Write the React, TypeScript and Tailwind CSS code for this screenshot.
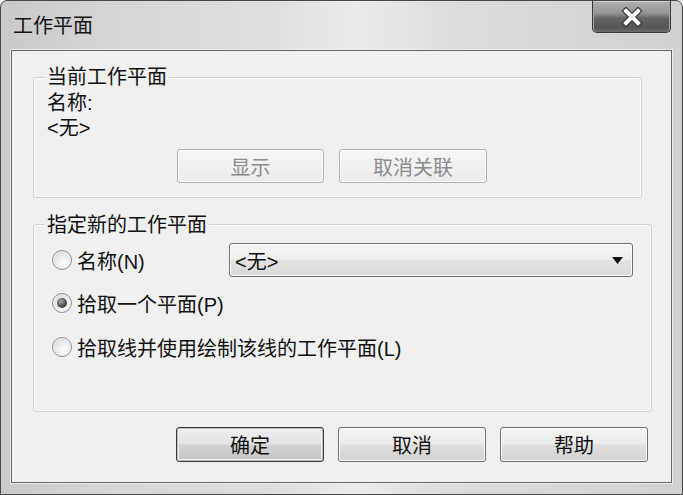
import React from "react";

function Radio({ checked }: { checked?: boolean }) {
  return (
    <span className="flex h-[20px] w-[20px] shrink-0 items-center justify-center rounded-full border border-[#8e8e8e] bg-[radial-gradient(circle_at_62%_68%,#ffffff_0%,#eeeeee_40%,#cdcdcd_100%)] shadow-[inset_0_0_0_1px_#f4f4f4]">
      {checked && (
        <span className="h-[10px] w-[10px] rounded-full bg-[radial-gradient(circle_at_40%_35%,#a8a8a8_0%,#4e4e4e_55%,#242424_100%)]" />
      )}
    </span>
  );
}

type Kind = "default" | "normal" | "disabled";

const btnStyles: Record<Kind, string> = {
  default:
    "border-[#3d3d3d] bg-[linear-gradient(180deg,#eeeeee_0%,#e4e4e4_48%,#d2d2d2_52%,#c6c6c6_100%)] shadow-[inset_0_0_0_1px_#b8b8b8,inset_0_0_0_2px_#f2f2f2] text-[#111111]",
  normal:
    "border-[#6f6f6f] bg-[linear-gradient(180deg,#f5f5f5_0%,#ececec_48%,#dedede_52%,#d2d2d2_100%)] shadow-[inset_0_0_0_1px_#fbfbfb] text-[#111111]",
  disabled:
    "border-[#b3b3b3] bg-[linear-gradient(180deg,#f6f6f6_0%,#f1f1f1_50%,#ebebeb_100%)] shadow-[inset_0_0_0_1px_#fcfcfc] text-[#8c8c8c]",
};

function Btn({ label, kind, w, h }: { label: string; kind: Kind; w: string; h: string }) {
  return (
    <div
      className={`flex shrink-0 items-center justify-center rounded-[3px] border pt-[3px] text-[20px] leading-[24px] ${btnStyles[kind]} ${w} ${h}`}
    >
      {label}
    </div>
  );
}

export default function App() {
  return (
    <div className="flex h-[495px] w-[683px] flex-col overflow-hidden rounded-t-[7px] border border-[#474747] bg-[linear-gradient(90deg,#c9c9c9_0%,#d5d5d5_15%,#dedede_40%,#ebebeb_52%,#dcdcdc_66%,#d1d1d1_100%)] font-['Liberation_Sans','Noto_Sans_CJK_SC',sans-serif] text-[#111111]">
      {/* Title bar */}
      <div className="flex h-[49px] shrink-0 items-start justify-between">
        <div className="pl-[12px] pt-[13px] text-[20px] leading-[24px] text-[#141414]">工作平面</div>
        <div className="mr-[11px] flex h-[32px] w-[79px] items-center justify-center rounded-b-[5px] border border-t-0 border-[#3a3a3a] bg-[linear-gradient(180deg,#b2b2b2_0%,#939393_40%,#646464_55%,#555555_85%,#6a6a6a_100%)] shadow-[inset_0_1px_0_#cfcfcf,inset_1px_0_0_#a5a5a5,inset_-1px_0_0_#a5a5a5]">
          <svg width="22" height="20" viewBox="0 0 22 20">
            <path d="M5 4 L17 16 M17 4 L5 16" stroke="#3a3a3a" strokeWidth="6.5" strokeLinecap="square" />
            <path d="M5 4 L17 16 M17 4 L5 16" stroke="#ffffff" strokeWidth="4" strokeLinecap="square" />
          </svg>
        </div>
      </div>

      {/* Client area */}
      <div className="ml-[10px] flex h-[433px] w-[661px] flex-col border border-[#666666] bg-[#f0f0f0] pl-[21px] pt-[14px] shadow-[0_0_0_1px_#ececec]">
        {/* Group 1 */}
        <fieldset className="w-[609px] rounded-[3px] border border-[#d2d2d2] pb-[14px] shadow-[inset_0_0_0_1px_#fcfcfc]">
          <legend className="ml-[11px] bg-[#f0f0f0] px-[2px] text-[20px] leading-[24px]">当前工作平面</legend>
          <div className="pl-[13px] pt-[2px] text-[20px] leading-[25px]">
            <div>名称:</div>
            <div>&lt;无&gt;</div>
          </div>
          <div className="mt-[8px] flex gap-[15px] pl-[143px]">
            <Btn label="显示" kind="disabled" w="w-[147px]" h="h-[34px]" />
            <Btn label="取消关联" kind="disabled" w="w-[148px]" h="h-[34px]" />
          </div>
        </fieldset>

        {/* Group 2 */}
        <fieldset className="mt-[13px] w-[619px] rounded-[3px] border border-[#d2d2d2] pb-[52px] shadow-[inset_0_0_0_1px_#fcfcfc]">
          <legend className="ml-[11px] bg-[#f0f0f0] px-[2px] pt-[2px] text-[20px] leading-[24px]">指定新的工作平面</legend>
          <div className="mt-[6px] flex h-[34px] items-center pl-[18px] text-[20px] leading-[24px]">
            <div className="flex w-[177px] items-center gap-[5px]">
              <Radio />
              <span className="pt-[4px]">名称(N)</span>
            </div>
            <div className="flex h-[34px] w-[404px] items-center justify-between rounded-[3px] border border-[#717171] bg-[linear-gradient(180deg,#f6f6f6_0%,#eeeeee_48%,#e2e2e2_52%,#d8d8d8_100%)] pl-[5px] pr-[9px] shadow-[inset_0_0_0_1px_#fbfbfb]">
              <span className="pt-[3px]">&lt;无&gt;</span>
              <svg width="11" height="7" viewBox="0 0 11 7">
                <path d="M0 0 H11 L5.5 7 Z" fill="#111111" />
              </svg>
            </div>
          </div>
          <div className="mt-[14px] flex h-[24px] items-center gap-[5px] pl-[18px] text-[20px] leading-[24px]">
            <Radio checked />
            <span className="pt-[4px]">拾取一个平面(P)</span>
          </div>
          <div className="mt-[20px] flex h-[24px] items-center gap-[5px] pl-[18px] text-[20px] leading-[24px]">
            <Radio />
            <span className="pt-[4px]">拾取线并使用绘制该线的工作平面(L)</span>
          </div>
        </fieldset>

        {/* Bottom buttons */}
        <div className="mt-[15px] flex gap-[14px] pl-[143px]">
          <Btn label="确定" kind="default" w="w-[148px]" h="h-[35px]" />
          <Btn label="取消" kind="normal" w="w-[148px]" h="h-[35px]" />
          <Btn label="帮助" kind="normal" w="w-[148px]" h="h-[35px]" />
        </div>
      </div>
    </div>
  );
}
